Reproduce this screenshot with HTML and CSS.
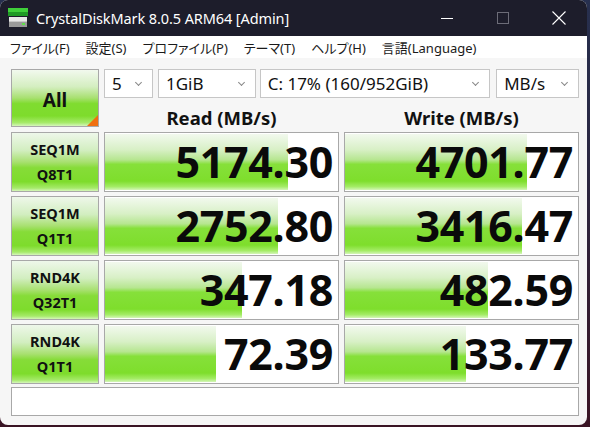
FILE: index.html
```html
<!DOCTYPE html>
<html lang="ja">

<head>
    <meta charset="UTF-8">
    <meta name="viewport" content="width=device-width, initial-scale=1.0">
    <title>CrystalDiskMark 8.0.5 ARM64 [Admin]</title>
    <link rel="stylesheet" href="styles.css">
</head>

<body>

    <div class="window">
        <header class="titlebar">
            <svg class="app-icon" width="22" height="22" viewBox="0 0 22 22">
                <rect x="1" y="1" width="20" height="4" fill="#3fcf3a" />
                <rect x="1" y="5" width="20" height="4" fill="#1f9a25" />
                <rect x="2" y="10" width="18" height="4" fill="#e8e8e8" />
                <rect x="2" y="14" width="18" height="6" fill="#9a9a9a" />
                <rect x="2" y="14" width="18" height="1" fill="#c8c8c8" />
                <rect x="15" y="16" width="3" height="2" fill="#5ee04a" />
            </svg>
            <span class="title">CrystalDiskMark 8.0.5 ARM64 [Admin]</span>
            <div class="controls">
                <span class="ctl">
                    <svg width="12" height="12" viewBox="0 0 12 12"><path d="M0 6.5h12" stroke="#fff" stroke-width="1" /></svg>
                </span>
                <span class="ctl">
                    <svg width="12" height="12" viewBox="0 0 12 12"><rect x="0.5" y="0.5" width="11" height="11" fill="none" stroke="#6c6c78" stroke-width="1" /></svg>
                </span>
                <span class="ctl">
                    <svg width="14" height="14" viewBox="0 0 14 14"><path d="M0.5 0.5L13.5 13.5M13.5 0.5L0.5 13.5" stroke="#fff" stroke-width="1.1" /></svg>
                </span>
            </div>
        </header>

        <nav class="menubar">
            <span>ファイル(F)</span>
            <span>設定(S)</span>
            <span>プロファイル(P)</span>
            <span>テーマ(T)</span>
            <span>ヘルプ(H)</span>
            <span>言語(Language)</span>
        </nav>

        <main class="main">
            <div class="top">
                <button class="all-btn">All</button>
                <div class="selects">
                    <div class="combo w-count">5<i class="chev"></i></div>
                    <div class="combo w-size">1GiB<i class="chev"></i></div>
                    <div class="combo w-drive">C: 17% (160/952GiB)<i class="chev"></i></div>
                    <div class="combo w-unit">MB/s<i class="chev"></i></div>
                </div>
                <div class="heads">
                    <div class="head">Read (MB/s)</div>
                    <div class="head">Write (MB/s)</div>
                </div>
            </div>

            <div class="rows">
                <div class="row">
                    <div class="label">SEQ1M<br>Q8T1</div>
                    <div class="cell"><div class="bar" style="width: 78.5%"></div><span class="num">5174.30</span></div>
                    <div class="cell"><div class="bar" style="width: 78.1%"></div><span class="num">4701.77</span></div>
                </div>
                <div class="row">
                    <div class="label">SEQ1M<br>Q1T1</div>
                    <div class="cell"><div class="bar" style="width: 74.2%"></div><span class="num">2752.80</span></div>
                    <div class="cell"><div class="bar" style="width: 76.0%"></div><span class="num">3416.47</span></div>
                </div>
                <div class="row">
                    <div class="label">RND4K<br>Q32T1</div>
                    <div class="cell"><div class="bar" style="width: 58.8%"></div><span class="num">347.18</span></div>
                    <div class="cell"><div class="bar" style="width: 61.4%"></div><span class="num">482.59</span></div>
                </div>
                <div class="row">
                    <div class="label">RND4K<br>Q1T1</div>
                    <div class="cell"><div class="bar" style="width: 47.6%"></div><span class="num">72.39</span></div>
                    <div class="cell"><div class="bar" style="width: 51.9%"></div><span class="num">133.77</span></div>
                </div>
            </div>

            <div class="status"></div>
        </main>
    </div>

</body>

</html>
```

FILE: styles.css
```css
body {
    margin: 0;
    padding: 0;
    width: 590px;
    height: 427px;
    background: linear-gradient(to bottom, #27304f 0%, #2a2640 40%, #3a1424 100%);
    font-family: "Noto Sans", "Noto Sans CJK JP", sans-serif;
    overflow: hidden;
}

.window {
    width: 587px;
    height: 425px;
    border-radius: 8px;
    overflow: hidden;
    background-color: #f6f6f6;
    display: flex;
    flex-direction: column;
}

/* title bar */

.titlebar {
    height: 36px;
    background-color: #1d1d2b;
    display: flex;
    align-items: center;
    color: #fff;
}

.app-icon {
    margin-left: 7px;
    margin-right: 7px;
}

.title {
    font-size: 14.5px;
    letter-spacing: -0.1px;
}

.controls {
    margin-left: auto;
    display: flex;
    height: 100%;
}

.ctl {
    width: 56px;
    display: flex;
    align-items: center;
    justify-content: center;
}

/* menu */

.menubar {
    height: 22px;
    background-color: #fff;
    display: flex;
    align-items: center;
    gap: 16px;
    padding-left: 10px;
    font-size: 13px;
    font-feature-settings: "palt";
    color: #1a1a1a;
}

/* main area */

.main {
    padding: 11px 8px 9px 11px;
}

.top {
    display: grid;
    grid-template-columns: 88px 475px;
    grid-template-rows: 29px 29px;
    column-gap: 5px;
}

.all-btn {
    grid-row: 1 / 3;
    position: relative;
    border: 1px solid #a8a8a8;
    margin: 0;
    padding: 4px 0 0 0;
    font-family: "Noto Sans", sans-serif;
    font-weight: bold;
    font-size: 19px;
    color: #111;
    background: linear-gradient(to bottom, #f2f9ee 0%, #d4eec0 30%, #a8e070 50%, #80dc30 60%, #7edc2c 82%, #a6ea6a 94%, #d6f6bc 100%);
}

.all-btn::after {
    content: "";
    position: absolute;
    right: 0;
    bottom: 0;
    border-style: solid;
    border-width: 0 0 11px 11px;
    border-color: transparent transparent #f07010 transparent;
}

.selects {
    display: flex;
    gap: 5px;
}

.combo {
    position: relative;
    box-sizing: border-box;
    height: 29px;
    background-color: #fff;
    border: 1px solid #c6c6c6;
    font-size: 17px;
    line-height: 27px;
    padding-left: 7px;
    color: #111;
}

.w-count {
    width: 49px;
}

.w-size {
    width: 98px;
}

.w-drive {
    width: 231px;
    margin-left: -1px;
}

.w-unit {
    width: 83px;
    margin-left: 1px;
}

.chev {
    position: absolute;
    right: 11px;
    top: 10px;
    width: 4px;
    height: 4px;
    border-right: 1px solid #888;
    border-bottom: 1px solid #888;
    transform: rotate(45deg);
}

.heads {
    display: grid;
    grid-template-columns: 235px 235px;
    column-gap: 5px;
}

.head {
    text-align: center;
    font-weight: bold;
    font-size: 18.5px;
    line-height: 29px;
    padding-top: 5px;
    color: #111;
}

/* result rows */

.rows {
    display: flex;
    flex-direction: column;
    gap: 6px;
    margin-top: 5px;
}

.row {
    display: grid;
    grid-template-columns: 88px 235px 235px;
    column-gap: 5px;
    height: 58px;
}

.label {
    box-sizing: border-box;
    border: 1px solid #a8a8a8;
    text-align: center;
    font-weight: bold;
    font-size: 14.5px;
    line-height: 25px;
    padding-top: 4px;
    color: #111;
    background: linear-gradient(to bottom, #eef7ea 0%, #d2eec0 30%, #a8e070 50%, #86dc38 60%, #7edc2c 84%, #a6ea6a 95%, #d6f6bc 100%);
}

.cell {
    position: relative;
    box-sizing: border-box;
    border: 1px solid #a8a8a8;
    background-color: #fff;
    text-align: right;
}

.bar {
    position: absolute;
    left: 0;
    top: 1px;
    bottom: 1px;
    background: linear-gradient(to bottom, #f2f9ee 0%, #d8f0c6 28%, #b6e690 46%, #86e03a 54%, #7ede2c 84%, #a4ec66 94%, #d4f6b8 100%);
}

.num {
    position: relative;
    font-weight: bold;
    font-size: 43px;
    line-height: 58px;
    padding-right: 5px;
    color: #0a0a0a;
    letter-spacing: -0.3px;
}

.status {
    margin-top: 5px;
    height: 29px;
    box-sizing: border-box;
    border: 1px solid #a8a8a8;
    background-color: #fff;
}
```
